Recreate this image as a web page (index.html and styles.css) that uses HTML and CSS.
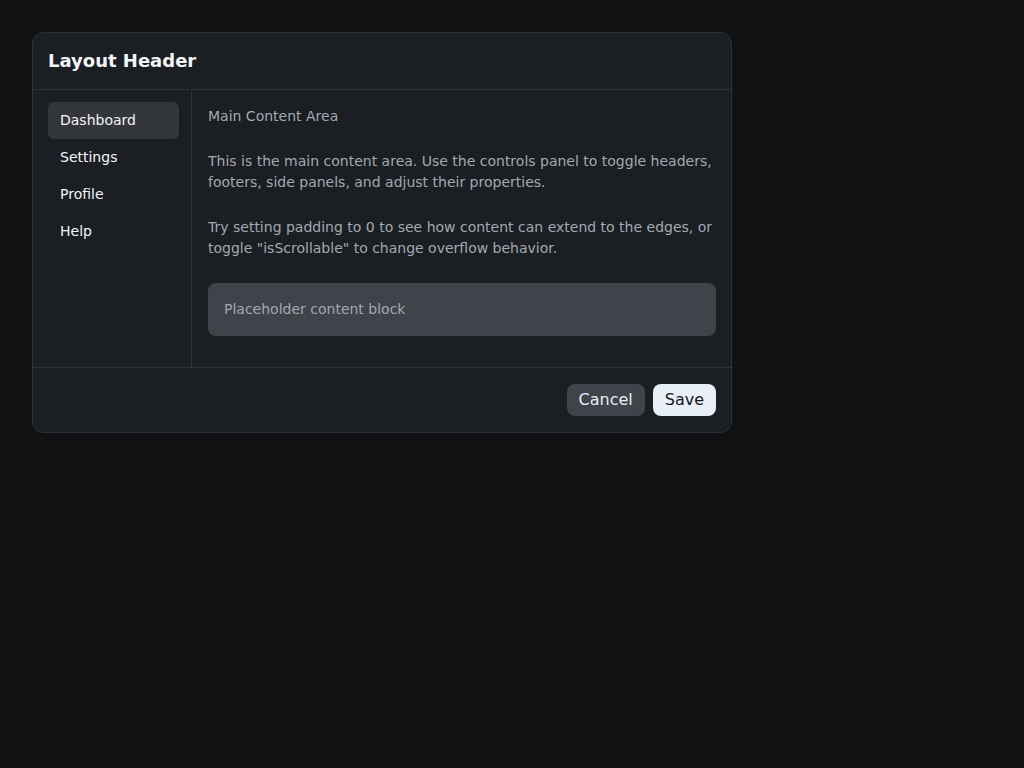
FILE: index.html
```html
<!DOCTYPE html>
<html lang="en">
<head>
    <meta charset="UTF-8">
    <meta name="viewport" content="width=device-width, initial-scale=1.0">
    <title>Layout</title>
    <link rel="stylesheet" href="styles.css">
</head>
<body>
    <div class="layout">
        <header class="layout-header">
            <h1>Layout Header</h1>
        </header>

        <div class="layout-body">
            <nav class="side-panel">
                <a class="nav-item active" href="#">Dashboard</a>
                <a class="nav-item" href="#">Settings</a>
                <a class="nav-item" href="#">Profile</a>
                <a class="nav-item" href="#">Help</a>
            </nav>

            <main class="content">
                <p>Main Content Area</p>
                <p>
                    This is the main content area. Use the controls panel to toggle headers,
                    footers, side panels, and adjust their properties.
                </p>
                <p>
                    Try setting padding to 0 to see how content can extend to the edges, or
                    toggle "isScrollable" to change overflow behavior.
                </p>
                <div class="placeholder">Placeholder content block</div>
            </main>
        </div>

        <footer class="layout-footer">
            <button class="btn btn-secondary">Cancel</button>
            <button class="btn btn-primary">Save</button>
        </footer>
    </div>
</body>
</html>
```

FILE: styles.css
```css
* {
    margin: 0;
    padding: 0;
    box-sizing: border-box;
}

body {
    font-family: 'DejaVu Sans', 'Noto Sans', sans-serif;
    background: #111213;
    color: #e5e7eb;
    min-height: 100vh;
    padding: 32px;
}

.layout {
    width: 700px;
    background: #1b1e22;
    border: 1px solid #2e3238;
    border-radius: 12px;
    overflow: hidden;
}

.layout-header {
    padding: 16px 15px;
    border-bottom: 1px solid #2e3238;
}

.layout-header h1 {
    font-size: 18px;
    line-height: 24px;
    font-weight: 700;
    color: #f1f5f9;
}

.layout-body {
    display: flex;
}

.side-panel {
    width: 159px;
    flex-shrink: 0;
    display: flex;
    flex-direction: column;
    padding: 12px 12px 12px 15px;
    border-right: 1px solid #2e3238;
}

.nav-item {
    display: block;
    padding: 8px 12px;
    font-size: 14px;
    line-height: 21px;
    color: #f3f4f6;
    text-decoration: none;
    border-radius: 6px;
}

.nav-item.active {
    background: #33363b;
}

.content {
    flex: 1;
    padding: 16px 15px 31px 16px;
    font-size: 14px;
    line-height: 21px;
    color: #a3a9b1;
}

.content p {
    margin-bottom: 24px;
}

.placeholder {
    background: #3f434a;
    border-radius: 8px;
    padding: 16px;
    color: #a3a9b1;
}

.layout-footer {
    display: flex;
    justify-content: flex-end;
    gap: 8px;
    padding: 16px 15px;
    border-top: 1px solid #2e3238;
}

.btn {
    font-family: inherit;
    font-size: 16px;
    line-height: 22px;
    padding: 5px 12px;
    border: none;
    border-radius: 8px;
    cursor: pointer;
}

.btn-secondary {
    background: #3f434a;
    color: #e8edf3;
}

.btn-primary {
    background: #e8eff6;
    color: #15171a;
}
```
